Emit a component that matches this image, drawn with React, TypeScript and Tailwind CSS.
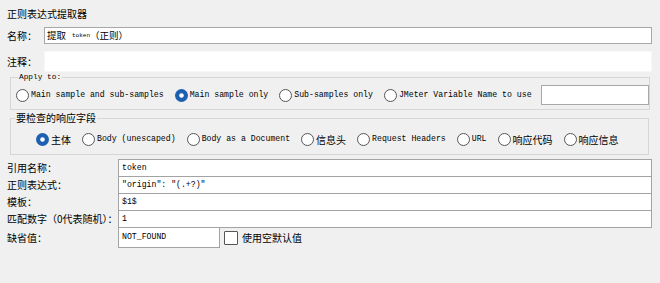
import type { ReactNode } from "react";

const cjk = "font-['Noto_Sans_CJK_SC',sans-serif]";
const mono = "font-['Liberation_Mono','Noto_Sans_CJK_SC',monospace]";

function Radio({ checked = false }: { checked?: boolean }) {
  return (
    <svg width="13" height="13" viewBox="0 0 13 13" className="shrink-0">
      {checked ? (
        <>
          <circle cx="6.5" cy="6.5" r="6.5" fill="#1d5fb0" />
          <circle cx="6.5" cy="6.5" r="2.3" fill="#ffffff" />
        </>
      ) : (
        <circle cx="6.5" cy="6.5" r="6" fill="#ffffff" stroke="#555555" strokeWidth="1" />
      )}
    </svg>
  );
}

function Option({ label, checked, cn }: { label: string; checked?: boolean; cn?: boolean }) {
  return (
    <div className="flex shrink-0 items-center whitespace-nowrap">
      <Radio checked={checked} />
      <span className={`ml-[2px] ${cn ? `${cjk} text-[10px]` : `${mono} text-[8.2px]`}`}>{label}</span>
    </div>
  );
}

function Row({ label, children, last }: { label: string; children: ReactNode; last?: boolean }) {
  return (
    <div className="flex">
      <div className={`${cjk} flex w-[111px] items-center whitespace-nowrap text-[10px] leading-[12px]`}>{label}</div>
      <div
        className={`flex flex-1 items-center whitespace-pre border-x border-t border-[#a3a3a3] bg-white pl-[3px] ${mono} text-[8.2px] ${
          last ? "h-[18px] border-b" : "h-[17px]"
        }`}
      >
        {children}
      </div>
    </div>
  );
}

export default function App() {
  const applyOptions = [
    { label: "Main sample and sub-samples" },
    { label: "Main sample only", checked: true },
    { label: "Sub-samples only" },
    { label: "JMeter Variable Name to use" },
  ];

  const fieldOptions = [
    { label: "主体", checked: true, cn: true },
    { label: "Body (unescaped)" },
    { label: "Body as a Document" },
    { label: "信息头", cn: true },
    { label: "Request Headers" },
    { label: "URL" },
    { label: "响应代码", cn: true },
    { label: "响应信息", cn: true },
  ];

  return (
    <div className="h-[283px] w-[660px] overflow-hidden bg-[#f0f0f0] pl-[7px] pr-[8px] pt-[7px] text-black">
      <div className={`${cjk} h-[14px] text-[10px] leading-[14px]`}>正则表达式提取器</div>

      <div className="mt-[6px] flex h-[17px] items-center">
        <div className={`${cjk} w-[37px] text-[10px] leading-[12px]`}>名称：</div>
        <div className={`flex h-[17px] flex-1 items-center border border-[#a8a8a8] bg-white pl-[2px] ${cjk} text-[9.5px]`}>
          提取<span className={`${mono} ml-[6px] text-[6px]`}>token</span>（正则）
        </div>
      </div>

      <div className="mt-[7px] flex h-[21px] items-center">
        <div className={`${cjk} w-[37px] text-[10px] leading-[12px]`}>注释：</div>
        <div className="h-[21px] flex-1 border border-[#f7f7f7] bg-white" />
      </div>

      <fieldset className="mx-[3px] border border-[#d6d6d6] pb-[4px] pl-[5px]">
        <legend className={`${mono} ml-[2px] px-[1px] text-[7.8px] leading-[10px]`}>Apply to:</legend>
        <div className="mt-[3px] flex h-[20px] items-center gap-[11px]">
          {applyOptions.map((o) => (
            <Option key={o.label} label={o.label} checked={o.checked} />
          ))}
          <div className="-ml-[2px] h-[20px] w-[108px] shrink-0 border border-[#a8a8a8] bg-white" />
        </div>
      </fieldset>

      <fieldset className="mx-[3px] mt-[2px] border border-[#d6d6d6] pb-[5px] pl-[25px]">
        <legend className={`${cjk} -ml-[21px] px-[1px] text-[10px] leading-[12px]`}>要检查的响应字段</legend>
        <div className="mt-[5px] flex h-[20px] items-center gap-[11px]">
          {fieldOptions.map((o) => (
            <Option key={o.label} label={o.label} checked={o.checked} cn={o.cn} />
          ))}
        </div>
      </fieldset>

      <div className="mt-[4px] flex flex-col">
        <Row label="引用名称：">token</Row>
        <Row label="正则表达式：">"origin": "(.+?)"</Row>
        <Row label="模板：">$1$</Row>
        <Row label="匹配数字（0代表随机）：" last>
          1
        </Row>
        <div className="-mt-[1px] flex h-[21px]">
          <div className={`${cjk} flex w-[111px] items-center text-[10px] leading-[12px]`}>缺省值：</div>
          <div className={`flex h-[21px] w-[102px] items-center border border-[#a3a3a3] bg-white pl-[3px] ${mono} text-[8.2px]`}>
            NOT_FOUND
          </div>
          <div className="ml-[4px] flex items-center">
            <div className="h-[14px] w-[14px] rounded-[1px] border border-[#555555] bg-white" />
            <span className={`${cjk} ml-[4px] text-[10px]`}>使用空默认值</span>
          </div>
        </div>
      </div>
    </div>
  );
}
